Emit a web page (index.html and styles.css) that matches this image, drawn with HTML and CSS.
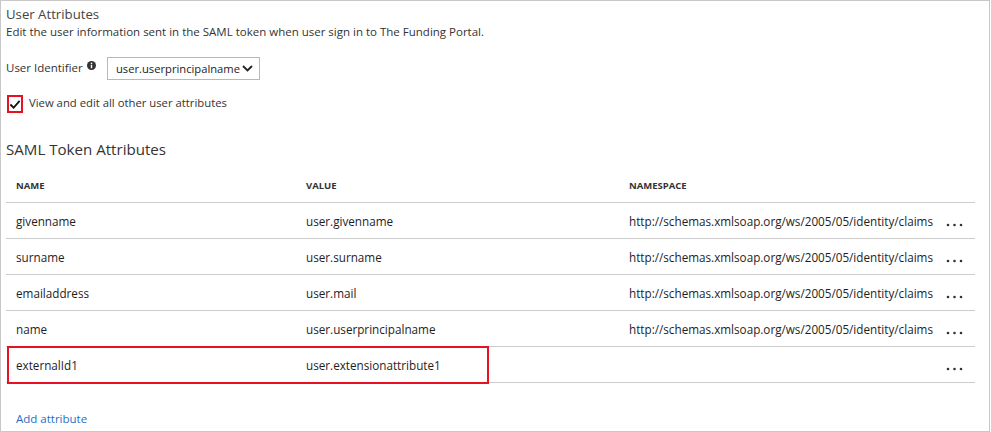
FILE: index.html
```html
<!DOCTYPE html>
<html>
<head>
<meta charset="utf-8">
<link rel="stylesheet" href="styles.css">
</head>
<body>
<div class="frame">
  <div class="title">User Attributes</div>
  <div class="desc">Edit the user information sent in the SAML token when user sign in to The Funding Portal.</div>
  <div class="ident">
    <span class="ident-label">User Identifier<svg class="info" width="9" height="9" viewBox="0 0 10 10"><circle cx="5" cy="5" r="5" fill="#333"/><rect x="4.2" y="4.2" width="1.6" height="3.8" fill="#fff"/><circle cx="5" cy="2.7" r="0.9" fill="#fff"/></svg></span>
    <div class="select"><span>user.userprincipalname</span><svg width="11" height="7" viewBox="0 0 11 7"><path d="M1 1 L5.5 5.5 L10 1" fill="none" stroke="#222" stroke-width="1.8"/></svg></div>
  </div>
  <div class="check-row">
    <span class="check"><svg width="13" height="11" viewBox="0 0 13 11"><path d="M1.5 5.5 L5 9 L11.5 1.5" fill="none" stroke="#111" stroke-width="2"/></svg></span>
    <span class="check-label">View and edit all other user attributes</span>
  </div>
  <div class="section">SAML Token Attributes</div>
  <div class="table">
    <div class="row head"><span class="c1">NAME</span><span class="c2">VALUE</span><span class="c3">NAMESPACE</span><span class="c4"></span></div>
    <div class="row"><span class="c1">givenname</span><span class="c2">user.givenname</span><span class="c3">http://schemas.xmlsoap.org/ws/2005/05/identity/claims</span><span class="c4"><svg width="17" height="4" viewBox="0 0 17 4"><circle cx="2" cy="2" r="1.3"/><circle cx="8.5" cy="2" r="1.3"/><circle cx="15" cy="2" r="1.3"/></svg></span></div>
    <div class="row"><span class="c1">surname</span><span class="c2">user.surname</span><span class="c3">http://schemas.xmlsoap.org/ws/2005/05/identity/claims</span><span class="c4"><svg width="17" height="4" viewBox="0 0 17 4"><circle cx="2" cy="2" r="1.3"/><circle cx="8.5" cy="2" r="1.3"/><circle cx="15" cy="2" r="1.3"/></svg></span></div>
    <div class="row"><span class="c1">emailaddress</span><span class="c2">user.mail</span><span class="c3">http://schemas.xmlsoap.org/ws/2005/05/identity/claims</span><span class="c4"><svg width="17" height="4" viewBox="0 0 17 4"><circle cx="2" cy="2" r="1.3"/><circle cx="8.5" cy="2" r="1.3"/><circle cx="15" cy="2" r="1.3"/></svg></span></div>
    <div class="row"><span class="c1">name</span><span class="c2">user.userprincipalname</span><span class="c3">http://schemas.xmlsoap.org/ws/2005/05/identity/claims</span><span class="c4"><svg width="17" height="4" viewBox="0 0 17 4"><circle cx="2" cy="2" r="1.3"/><circle cx="8.5" cy="2" r="1.3"/><circle cx="15" cy="2" r="1.3"/></svg></span></div>
    <div class="row"><span class="c1">externalId1</span><span class="c2">user.extensionattribute1</span><span class="c3"></span><span class="c4"><svg width="17" height="4" viewBox="0 0 17 4"><circle cx="2" cy="2" r="1.3"/><circle cx="8.5" cy="2" r="1.3"/><circle cx="15" cy="2" r="1.3"/></svg></span><span class="redbox"></span></div>
  </div>
  <div class="add">Add attribute</div>
</div>
</body>
</html>
```
FILE: styles.css
```css
* { box-sizing: border-box; }
body { margin: 0; background: #fff; font-family: "Open Sans", "Noto Sans", sans-serif; color: #333; }
.frame {
  width: 990px; height: 432px;
  border: 1px solid #c8c8c8;
  padding: 3px 0 0 5px;
  font-size: 11.5px;
}
.title { font-size: 13.2px; color: #444; line-height: 20px; }
.desc { font-size: 11.5px; line-height: 16px; color: #333; }
.ident { display: flex; align-items: center; margin-top: 17px; height: 23px; }
.ident-label { width: 101px; display: flex; align-items: center; margin-top: -3px; }
.info { margin-left: 4px; margin-top: -3px; }
.select {
  width: 153px; height: 23px;
  border: 1px solid #b8b8b8;
  display: flex; align-items: center; justify-content: space-between;
  padding: 0 6px 0 8px; color: #222; font-size: 11.2px;
}
.check-row { display: flex; align-items: center; margin-top: 15px; height: 18px; }
.check {
  width: 16px; height: 18px; border: 2px solid #e81123; margin-left: 1px;
  display: flex; align-items: flex-end; justify-content: center; padding-bottom: 1px;
}
.check-label { margin-left: 6px; margin-top: -4px; font-size: 11.3px; }
.section { font-size: 15.1px; margin-top: 25px; color: #333; line-height: 22px; }
.table { margin-top: 7px; width: 969px; }
.row {
  position: relative;
  display: flex; align-items: center; height: 36px;
  border-bottom: 1px solid #ccc;
  font-size: 11.7px; color: #1e1e1e;
}
.row.head { height: 36px; font-size: 9.5px; font-weight: 700; color: #333; padding-top: 1px; }
.c1 { width: 300px; padding-left: 10px; }
.c2 { width: 323px; }
.c3 { width: 317px; }
.c4 { width: 29px; display: flex; padding-top: 8px; }
.c4 svg { fill: #333; }
.redbox {
  position: absolute; left: 1px; top: -1px; width: 482px; height: 38px;
  border: 2px solid #e81123;
}
.add { color: #1f6fc5; margin-top: 28px; padding-left: 10px; }
```
